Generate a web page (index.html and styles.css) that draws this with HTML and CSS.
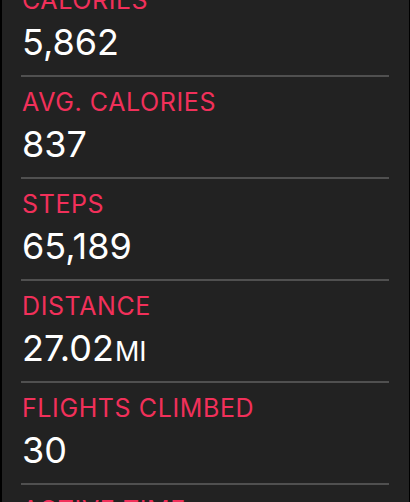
FILE: index.html
```html
<!DOCTYPE html>
<html lang="en">
<head>
  <meta charset="UTF-8">
  <meta name="viewport" content="width=device-width, initial-scale=1.0">
  <link rel="stylesheet" href="styles.css">
  <title>Activity Summary</title>
</head>
<body>

<div id="summary">
  <div class="stat">
    <div class="stat-body">
      <div class="stat-label">CALORIES</div>
      <div class="stat-value">5,862</div>
    </div>
  </div>
  <div class="stat">
    <div class="stat-body">
      <div class="stat-label">AVG. CALORIES</div>
      <div class="stat-value">837</div>
    </div>
  </div>
  <div class="stat">
    <div class="stat-body">
      <div class="stat-label">STEPS</div>
      <div class="stat-value">65,189</div>
    </div>
  </div>
  <div class="stat">
    <div class="stat-body">
      <div class="stat-label">DISTANCE</div>
      <div class="stat-value">27.02<span class="unit">MI</span></div>
    </div>
  </div>
  <div class="stat">
    <div class="stat-body">
      <div class="stat-label">FLIGHTS CLIMBED</div>
      <div class="stat-value">30</div>
    </div>
  </div>
  <div class="stat">
    <div class="stat-body">
      <div class="stat-label">ACTIVE TIME</div>
      <div class="stat-value">7:41:09</div>
    </div>
  </div>
</div>

</body>
</html>
```

FILE: styles.css
```css
body {
  margin: 0;
  background-color: #000000;
  font-family: 'Inter', 'Roboto', sans-serif;
  overflow: hidden;
}

#summary {
  margin: -25px 1px 0 2px;
  background-color: #222222;
  min-height: 600px;
}

.stat {
  padding-left: 19px;
}

.stat-body {
  margin-right: 20px;
  padding: 11px 0 13px 1px;
  border-bottom: 2px solid #505050;
}

.stat-label {
  color: #f1305a;
  font-size: 25px;
  line-height: 28px;
  letter-spacing: 0.6px;
}

.stat-value {
  margin-top: 8px;
  color: #ffffff;
  font-size: 36px;
  line-height: 40px;
}

/* keep the smaller unit from growing the line */
.unit {
  font-size: 27px;
  line-height: 1;
  margin-left: 1px;
}
```
